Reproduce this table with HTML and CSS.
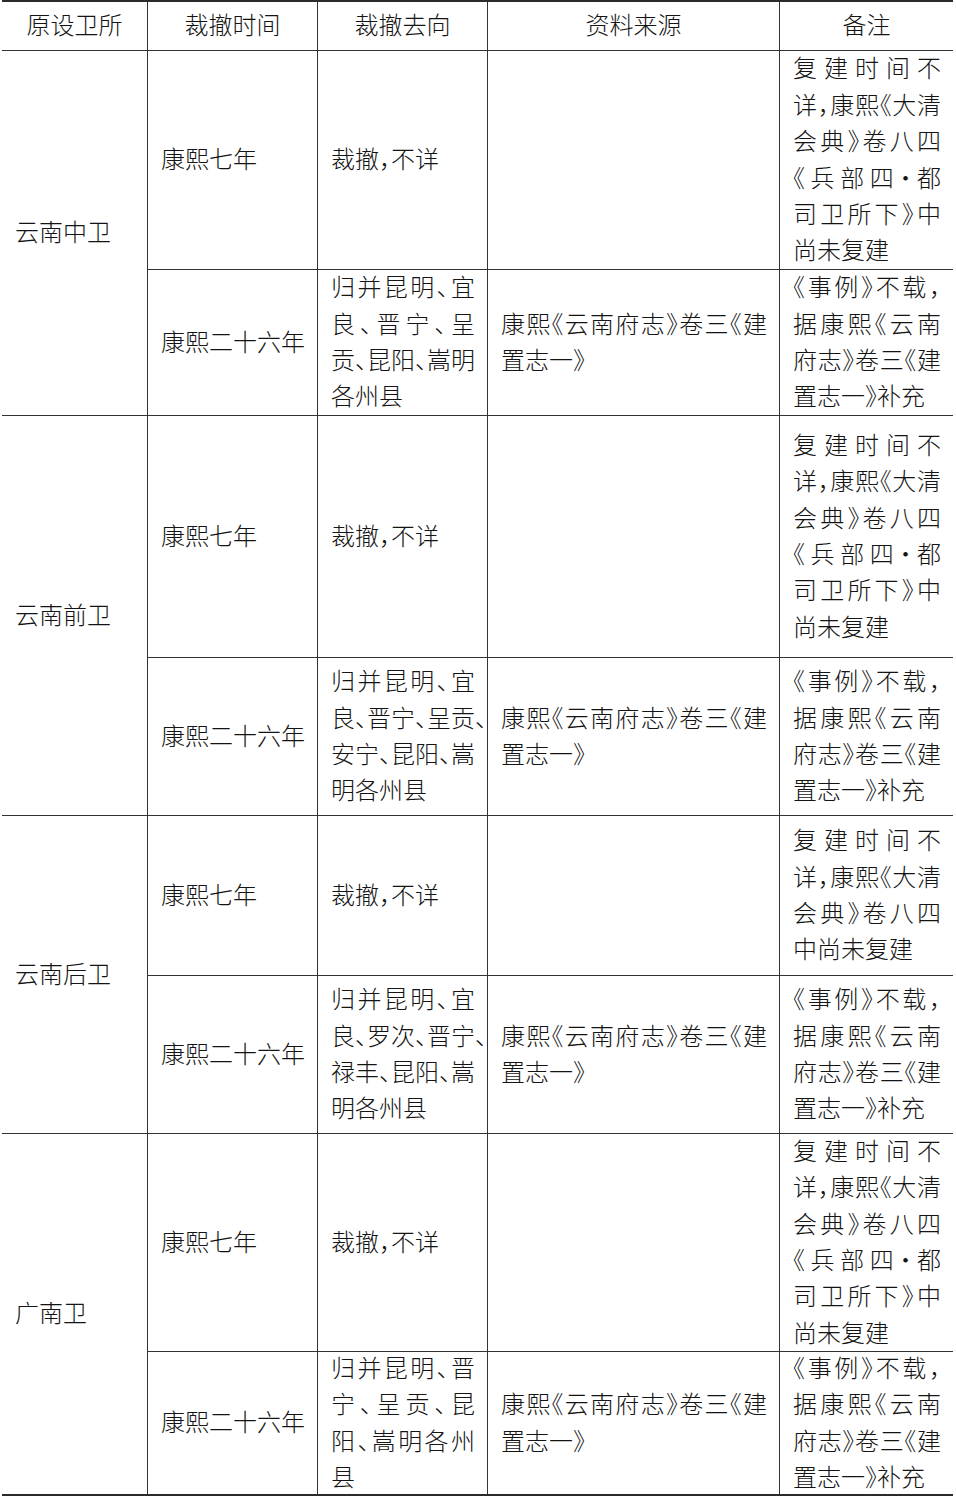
FILE: index.html
```html
<!DOCTYPE html>
<html lang="zh-CN">
<head>
<meta charset="utf-8">
<title>卫所裁撤表</title>
<link rel="stylesheet" href="styles.css">
</head>
<body>
<div class="table">
  <div class="cell head">原设卫所</div>
  <div class="cell head">裁撤时间</div>
  <div class="cell head">裁撤去向</div>
  <div class="cell head">资料来源</div>
  <div class="cell head last-col">备注</div>

  <div class="cell group">云南中卫</div>
  <div class="cell">康熙七年</div>
  <div class="cell">裁撤，不详</div>
  <div class="cell"></div>
  <div class="cell last-col">
    <span class="ln j">复建时间不</span>
    <span class="ln j">详，康熙《大清</span>
    <span class="ln j">会典》卷八四</span>
    <span class="ln j">《兵部四·都</span>
    <span class="ln j">司卫所下》中</span>
    <span class="ln">尚未复建</span>
  </div>
  <div class="cell">康熙二十六年</div>
  <div class="cell">
    <span class="ln j">归并昆明、宜</span>
    <span class="ln j">良、晋宁、呈</span>
    <span class="ln j">贡、昆阳、嵩明</span>
    <span class="ln">各州县</span>
  </div>
  <div class="cell">
    <span class="ln j">康熙《云南府志》卷三《建</span>
    <span class="ln">置志一》</span>
  </div>
  <div class="cell last-col">
    <span class="ln j">《事例》不载，</span>
    <span class="ln j">据康熙《云南</span>
    <span class="ln j">府志》卷三《建</span>
    <span class="ln">置志一》补充</span>
  </div>

  <div class="cell group">云南前卫</div>
  <div class="cell">康熙七年</div>
  <div class="cell">裁撤，不详</div>
  <div class="cell"></div>
  <div class="cell last-col">
    <span class="ln j">复建时间不</span>
    <span class="ln j">详，康熙《大清</span>
    <span class="ln j">会典》卷八四</span>
    <span class="ln j">《兵部四·都</span>
    <span class="ln j">司卫所下》中</span>
    <span class="ln">尚未复建</span>
  </div>
  <div class="cell">康熙二十六年</div>
  <div class="cell">
    <span class="ln j">归并昆明、宜</span>
    <span class="ln j">良、晋宁、呈贡、</span>
    <span class="ln j">安宁、昆阳、嵩</span>
    <span class="ln">明各州县</span>
  </div>
  <div class="cell">
    <span class="ln j">康熙《云南府志》卷三《建</span>
    <span class="ln">置志一》</span>
  </div>
  <div class="cell last-col">
    <span class="ln j">《事例》不载，</span>
    <span class="ln j">据康熙《云南</span>
    <span class="ln j">府志》卷三《建</span>
    <span class="ln">置志一》补充</span>
  </div>

  <div class="cell group">云南后卫</div>
  <div class="cell">康熙七年</div>
  <div class="cell">裁撤，不详</div>
  <div class="cell"></div>
  <div class="cell last-col">
    <span class="ln j">复建时间不</span>
    <span class="ln j">详，康熙《大清</span>
    <span class="ln j">会典》卷八四</span>
    <span class="ln">中尚未复建</span>
  </div>
  <div class="cell">康熙二十六年</div>
  <div class="cell">
    <span class="ln j">归并昆明、宜</span>
    <span class="ln j">良、罗次、晋宁、</span>
    <span class="ln j">禄丰、昆阳、嵩</span>
    <span class="ln">明各州县</span>
  </div>
  <div class="cell">
    <span class="ln j">康熙《云南府志》卷三《建</span>
    <span class="ln">置志一》</span>
  </div>
  <div class="cell last-col">
    <span class="ln j">《事例》不载，</span>
    <span class="ln j">据康熙《云南</span>
    <span class="ln j">府志》卷三《建</span>
    <span class="ln">置志一》补充</span>
  </div>

  <div class="cell group last-row">广南卫</div>
  <div class="cell">康熙七年</div>
  <div class="cell">裁撤，不详</div>
  <div class="cell"></div>
  <div class="cell last-col">
    <span class="ln j">复建时间不</span>
    <span class="ln j">详，康熙《大清</span>
    <span class="ln j">会典》卷八四</span>
    <span class="ln j">《兵部四·都</span>
    <span class="ln j">司卫所下》中</span>
    <span class="ln">尚未复建</span>
  </div>
  <div class="cell last-row">康熙二十六年</div>
  <div class="cell last-row">
    <span class="ln j">归并昆明、晋</span>
    <span class="ln j">宁、呈贡、昆</span>
    <span class="ln j">阳、嵩明各州</span>
    <span class="ln">县</span>
  </div>
  <div class="cell last-row">
    <span class="ln j">康熙《云南府志》卷三《建</span>
    <span class="ln">置志一》</span>
  </div>
  <div class="cell last-row last-col">
    <span class="ln j">《事例》不载，</span>
    <span class="ln j">据康熙《云南</span>
    <span class="ln j">府志》卷三《建</span>
    <span class="ln">置志一》补充</span>
  </div>
</div>
</body>
</html>
```

FILE: styles.css
```css
html, body {
  margin: 0;
  padding: 0;
  background: #ffffff;
}

body {
  font-family: "Noto Sans CJK SC", "Noto Sans CJK TC", sans-serif;
  font-weight: 300;
  font-size: 24px;
  line-height: 36.4px;
  color: #141414;
  font-feature-settings: "halt";
}

.table {
  margin-left: 2px;
  width: 951px;
  display: grid;
  grid-template-columns: 146px 170px 170px 292px 173px;
  grid-template-rows: 49px 219px 146px 242px 158px 160px 158px 218px 142px;
  border-top: 2px solid #2b2b2b;
  border-bottom: 2px solid #2b2b2b;
}

.cell {
  box-sizing: border-box;
  display: flex;
  flex-direction: column;
  justify-content: center;
  padding: 0 12px 3px 13px;
  border-right: 1px solid #333333;
  border-bottom: 1px solid #333333;
  text-align: left;
  overflow: visible;
}

.cell.head {
  align-items: center;
  text-align: center;
  padding: 0 4px 3px;
}

.cell.group {
  grid-row: span 2;
}

.cell.last-col {
  border-right: none;
}

.cell.last-row {
  border-bottom: none;
}

.ln {
  display: block;
  white-space: nowrap;
}

.ln.j {
  text-align: justify;
  text-align-last: justify;
}
```
